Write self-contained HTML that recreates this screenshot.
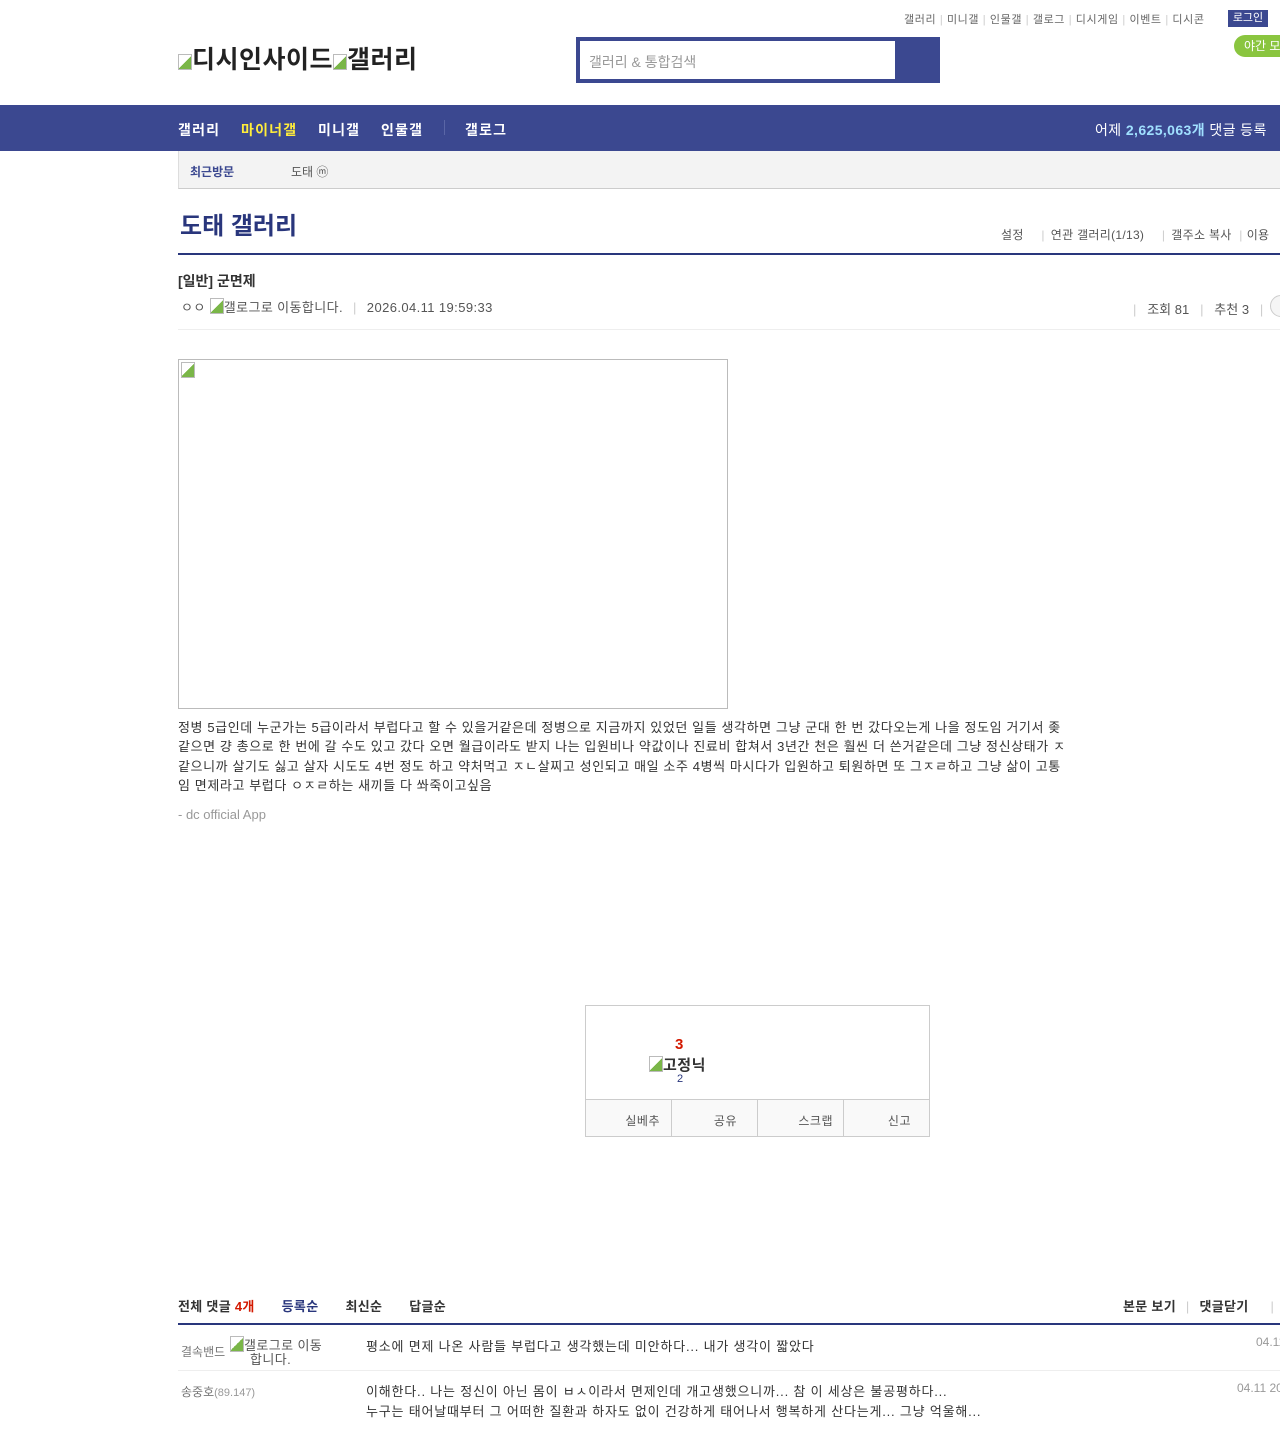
<!DOCTYPE html>
<html><head><meta charset="utf-8">
<style>
*{margin:0;padding:0;box-sizing:border-box}
body{width:1280px;height:1429px;overflow:hidden;background:#fff;font-family:"Liberation Sans","Noto Sans CJK KR",sans-serif;color:#333;position:relative}
.a{position:absolute;white-space:nowrap}
.bi{display:inline-block;width:14px;height:16px;border:1px solid #bbb;background:linear-gradient(135deg,#fff 50%,#7ab648 50%);vertical-align:-2px}
.n{position:absolute;top:120px;font-size:14px;font-weight:bold;color:#fff;letter-spacing:1.2px}
</style></head><body>
<div class="a" style="top:11px;left:904px;font-size:11px;color:#666;letter-spacing:0.6px">갤러리 <span style="color:#ccc">|</span> 미니갤 <span style="color:#ccc">|</span> 인물갤 <span style="color:#ccc">|</span> 갤로그 <span style="color:#ccc">|</span> 디시게임 <span style="color:#ccc">|</span> 이벤트 <span style="color:#ccc">|</span> 디시콘</div>
<div class="a" style="top:10px;left:1228px;width:40px;height:17px;background:#3b4890;color:#fff;font-size:11px;text-align:center;line-height:17px">로그인</div>
<div class="a" style="top:35px;left:1234px;width:60px;height:22px;border-radius:11px;background:#8ac53f;color:#fff;font-size:12px;line-height:22px;padding-left:10px">야간 모</div>
<div class="a" style="top:40px;left:178px;font-size:25px;font-weight:bold;color:#222;letter-spacing:0.5px"><span class="bi"></span>디시인사이드<span class="bi"></span>갤러리</div>
<div class="a" style="top:37px;left:576px;width:364px;height:46px;background:#3b4890"></div>
<div class="a" style="top:41px;left:580px;width:315px;height:38px;background:#fff;font-size:14px;color:#999;padding:11px 0 0 9px">갤러리 &amp; 통합검색</div>
<div class="a" style="top:105px;left:0;width:1280px;height:46px;background:#3b4890"></div>
<div class="n" style="left:178px">갤러리</div>
<div class="n" style="left:241px;color:#ffed3b">마이너갤</div>
<div class="n" style="left:318px">미니갤</div>
<div class="n" style="left:381px">인물갤</div>
<div class="a" style="top:120px;left:444px;width:1px;height:15px;background:#5a66a6"></div>
<div class="n" style="left:465px">갤로그</div>
<div class="a" style="top:120px;left:1095px;font-size:14px;color:#fff;letter-spacing:0.4px">어제 <b style="color:#a0e0ff">2,625,063개</b> 댓글 등록</div>
<div class="a" style="top:151px;left:178px;width:1102px;height:38px;background:#f3f3f3;border-left:1px solid #ddd;border-bottom:1px solid #ccc"></div>
<div class="a" style="top:163px;left:190px;font-size:12px;font-weight:bold;color:#3b4890">최근방문</div>
<div class="a" style="top:163px;left:291px;font-size:12px;color:#555">도태 ⓜ</div>
<div class="a" style="top:206px;left:180px;font-size:24px;font-weight:bold;color:#29367c">도태 갤러리</div>
<div class="a" style="top:226px;left:1001px;font-size:12px;color:#555;letter-spacing:0.3px">설정 <span style="color:#ccc;margin:0 6px 0 14px">|</span>연관 갤러리(1/13) <span style="color:#ccc;margin:0 6px 0 14px">|</span>갤주소 복사 <span style="color:#ccc;margin:0 4px">|</span>이용</div>
<div class="a" style="top:253px;left:178px;width:1102px;height:2px;background:#29367c"></div>
<div class="a" style="top:271px;left:178px;font-size:14px;font-weight:bold;color:#333">[일반] 군면제</div>
<div class="a" style="top:297px;left:181px;font-size:13px;color:#555;letter-spacing:0.4px">ㅇㅇ <span class="bi"></span>갤로그로 이동합니다. <span style="color:#ccc;margin:0 6px">|</span> 2026.04.11 19:59:33</div>
<div class="a" style="top:299px;left:1133px;font-size:13px;color:#555"><span style="color:#ccc">|</span>&nbsp;&nbsp; 조회 81 &nbsp;&nbsp;<span style="color:#ccc">|</span>&nbsp;&nbsp; 추천 3 &nbsp;&nbsp;<span style="color:#ccc">|</span></div>
<div class="a" style="top:295px;left:1270px;width:22px;height:22px;border:1px solid #ccc;border-radius:11px;background:#f5f5f5"></div>
<div class="a" style="top:329px;left:178px;width:1102px;height:1px;background:#eee"></div>
<div class="a" style="top:359px;left:178px;width:550px;height:350px;border:1px solid #bbb"><span class="bi" style="margin:2px"></span></div>
<div class="a" style="top:718px;left:178px;width:960px;white-space:nowrap;font-size:13px;line-height:19.3px;color:#333;letter-spacing:0.6px">정병 5급인데 누군가는 5급이라서 부럽다고 할 수 있을거같은데 정병으로 지금까지 있었던 일들 생각하면 그냥 군대 한 번 갔다오는게 나을 정도임 거기서 좆<br>같으면 걍 총으로 한 번에 갈 수도 있고 갔다 오면 월급이라도 받지 나는 입원비나 약값이나 진료비 합쳐서 3년간 천은 훨씬 더 쓴거같은데 그냥 정신상태가 ㅈ<br>같으니까 살기도 싫고 살자 시도도 4번 정도 하고 약처먹고 ㅈㄴ살찌고 성인되고 매일 소주 4병씩 마시다가 입원하고 퇴원하면 또 그ㅈㄹ하고 그냥 삶이 고통<br>임 면제라고 부럽다 ㅇㅈㄹ하는 새끼들 다 쏴죽이고싶음</div>
<div class="a" style="top:807px;left:178px;font-size:13px;color:#999">- dc official App</div>
<div class="a" style="top:1005px;left:585px;width:345px;height:132px;border:1px solid #ccc"></div>
<div class="a" style="top:1036px;left:675px;font-size:15px;font-weight:bold;color:#d31900">3</div>
<div class="a" style="top:1054px;left:649px;font-size:15px;font-weight:bold;color:#333;letter-spacing:0.5px"><span class="bi"></span>고정닉</div>
<div class="a" style="top:1073px;left:677px;font-size:11px;color:#29367c">2</div>
<div class="a" style="top:1099px;left:586px;width:343px;height:37px;border-top:1px solid #ccc;background:#f9f9f9;display:flex;font-size:12px;color:#555;letter-spacing:0.5px">
<div style="width:86px;border-right:1px solid #ccc;text-align:right;padding:12px 11px 0 0">실베추</div>
<div style="width:86px;border-right:1px solid #ccc;text-align:right;padding:12px 20px 0 0">공유</div>
<div style="width:86px;border-right:1px solid #ccc;text-align:right;padding:12px 10px 0 0">스크랩</div>
<div style="width:85px;text-align:right;padding:12px 18px 0 0">신고</div></div>
<div class="a" style="top:1296px;left:178px;font-size:13px;font-weight:bold;color:#333;letter-spacing:0.3px">전체 댓글 <span style="color:#d31900">4개</span><span style="color:#29367c;margin-left:27px">등록순</span><span style="margin-left:27px">최신순</span><span style="margin-left:27px">답글순</span></div>
<div class="a" style="top:1296px;left:1123px;font-size:13px;font-weight:bold;color:#333;letter-spacing:0.3px">본문 보기 <span style="color:#ccc;font-weight:normal;margin:0 6px">|</span> 댓글닫기 <span style="color:#ccc;font-weight:normal;margin-left:18px">|</span></div>
<div class="a" style="top:1323px;left:178px;width:1102px;height:2px;background:#29367c"></div>
<div class="a" style="top:1343px;left:181px;font-size:12px;color:#777">결속밴드</div>
<div class="a" style="top:1336px;left:230px;font-size:13px;color:#555;line-height:14px;letter-spacing:0.4px"><span class="bi"></span>갤로그로 이동<br>&nbsp;&nbsp;&nbsp;&nbsp;&nbsp;합니다.</div>
<div class="a" style="top:1336px;left:366px;font-size:13px;color:#333;letter-spacing:0.8px">평소에 면제 나온 사람들 부럽다고 생각했는데 미안하다... 내가 생각이 짧았다</div>
<div class="a" style="top:1335px;left:1256px;font-size:12px;color:#999">04.11</div>
<div class="a" style="top:1370px;left:178px;width:1102px;height:1px;background:#eee"></div>
<div class="a" style="top:1383px;left:181px;font-size:12px;color:#777">송중호<span style="font-size:11px;color:#999">(89.147)</span></div>
<div class="a" style="top:1382px;left:366px;font-size:13px;color:#333;line-height:20px;letter-spacing:0.8px">이해한다.. 나는 정신이 아닌 몸이 ㅂㅅ이라서 면제인데 개고생했으니까... 참 이 세상은 불공평하다...<br>누구는 태어날때부터 그 어떠한 질환과 하자도 없이 건강하게 태어나서 행복하게 산다는게... 그냥 억울해...</div>
<div class="a" style="top:1381px;left:1237px;font-size:12px;color:#999">04.11 20</div>
</body></html>
